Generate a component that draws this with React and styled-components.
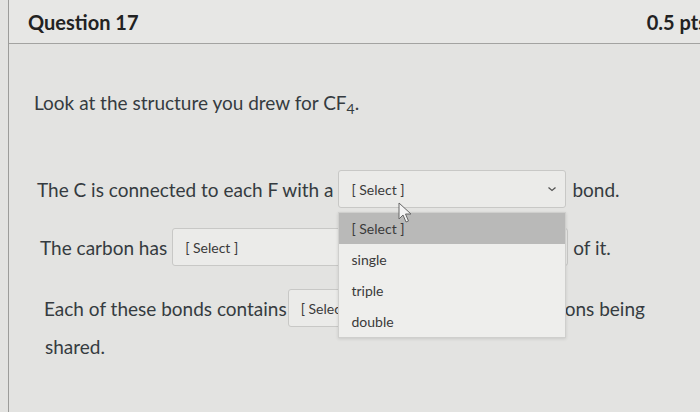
import React from 'react';
import styled, { createGlobalStyle } from 'styled-components';

const GlobalStyle = createGlobalStyle`
  html, body {
    margin: 0;
    padding: 0;
    background: #e3e3e1;
    font-family: Lato, 'Open Sans', sans-serif;
    color: #353b40;
    overflow: hidden;
  }
`;

const Card = styled.div`
  margin-left: 8px;
  height: 412px;
  border-left: 1px solid #9c9c9a;
`;

const Header = styled.div`
  height: 43px;
  display: flex;
  align-items: center;
  justify-content: space-between;
  padding: 0 0 0 19px;
  background: #e7e7e5;
  border-bottom: 1px solid #a3a3a1;
  font-size: 20px;
  font-weight: 700;
  color: #222;
  white-space: nowrap;
  overflow: hidden;
`;

const Points = styled.span`
  margin-right: -7px;
`;

const Body = styled.div`
  padding-top: 47px;
  font-size: 19px;
`;

const Intro = styled.p`
  margin: 0 0 0 25px;
  line-height: 24px;
`;

const Row = styled.div`
  display: flex;
  align-items: center;
  margin-left: ${({ indent }) => indent}px;
  margin-top: ${({ gap }) => gap}px;
  height: 38px;
  white-space: nowrap;
`;

const Text = styled.span`
  margin-right: ${({ space }) => space || 0}px;
`;

const SelectWrap = styled.div`
  position: relative;
  width: ${({ w }) => w}px;
  flex: none;
`;

const SelectBox = styled.div`
  box-sizing: border-box;
  height: 38px;
  display: flex;
  align-items: center;
  justify-content: space-between;
  padding: 0 8px 0 12px;
  background: #ebebe9;
  border: 1px solid #c8c8c6;
  border-radius: 3px;
  font-size: 14px;
  color: #3a3a3a;
  overflow: hidden;
`;

const Chevron = styled.svg`
  width: 10px;
  height: 10px;
  flex: none;
`;

const Menu = styled.ul`
  position: absolute;
  left: 0;
  top: 42px;
  width: 228px;
  margin: 0;
  padding: 0;
  list-style: none;
  box-sizing: border-box;
  background: #eeeeec;
  border: 1px solid #cfcfcd;
  box-shadow: 0 1px 3px rgba(0, 0, 0, 0.12);
  z-index: 5;
`;

const Option = styled.li`
  height: 31px;
  display: flex;
  align-items: center;
  padding-left: 12px;
  font-size: 14px;
  color: #3a3a3a;
  background: ${({ active }) => (active ? '#b9b9b8' : 'transparent')};
`;

const Cursor = styled.svg`
  position: absolute;
  left: 60px;
  top: 32px;
  width: 16px;
  height: 22px;
  z-index: 6;
`;

const Tail = styled.span`
  margin-left: ${({ space }) => space}px;
`;

const Shared = styled.p`
  margin: 8px 0 0 36px;
  line-height: 24px;
`;

function Select({ w, children }) {
  return (
    <SelectWrap w={w}>
      <SelectBox>
        <span>[ Select ]</span>
        <Chevron viewBox="0 0 10 10">
          <path d="M1.5 3.5 L5 6.5 L8.5 3.5" fill="none" stroke="#555" strokeWidth="1.3" />
        </Chevron>
      </SelectBox>
      {children}
    </SelectWrap>
  );
}

export default function App() {
  return (
    <>
      <GlobalStyle />
      <Card>
        <Header>
          <span>Question 17</span>
          <Points>0.5 pts</Points>
        </Header>
        <Body>
          <Intro>
            Look at the structure you drew for CF<sub style={{ fontSize: '14px', verticalAlign: '-4px' }}>4</sub>.
          </Intro>
          <Row indent={28} gap={49}>
            <Text space={5}>The C is connected to each F with a</Text>
            <Select w={228}>
              <Menu>
                <Option active>[ Select ]</Option>
                <Option>single</Option>
                <Option>triple</Option>
                <Option>double</Option>
              </Menu>
              <Cursor viewBox="0 0 16 22">
                <path
                  d="M1 1 L1 17 L5 13 L8 20 L10.5 19 L7.5 12 L13 12 Z"
                  fill="#f4f4f4"
                  stroke="#666"
                  strokeWidth="1"
                  strokeLinejoin="round"
                />
              </Cursor>
            </Select>
            <Tail space={6}>bond.</Tail>
          </Row>
          <Row indent={31} gap={20}>
            <Text space={5}>The carbon has</Text>
            <Select w={396} />
            <Tail space={5}>of it.</Tail>
          </Row>
          <Row indent={35} gap={23}>
            <Text space={1}>Each of these bonds contains</Text>
            <Select w={270} />
            <Tail space={7}>ons being</Tail>
          </Row>
          <Shared>shared.</Shared>
        </Body>
      </Card>
    </>
  );
}
